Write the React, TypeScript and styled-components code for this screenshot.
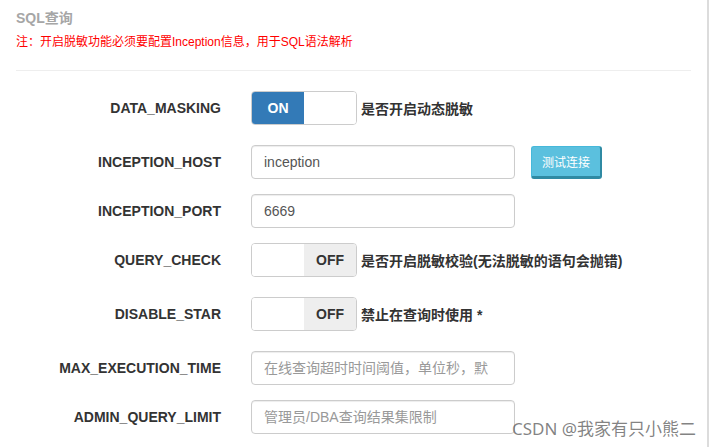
import React from "react";
import styled, { createGlobalStyle } from "styled-components";

const GlobalStyle = createGlobalStyle`
  html, body { margin: 0; padding: 0; background: #fff; }
  body {
    font-family: "Liberation Sans", Arial, "Noto Sans CJK SC", sans-serif;
    color: #333;
  }
  * { box-sizing: border-box; }
`;

const Panel = styled.div`
  position: relative;
  width: 709px;
  height: 447px;
  overflow: hidden;
  border-right: 2px solid #dcdcdc;
  padding: 8px 16px 0 16px;
`;

const Title = styled.div`
  font-size: 14px;
  line-height: 20px;
  font-weight: 700;
  color: #a6a6a6;
  font-family: "Liberation Sans", Arial, "Noto Sans CJK SC", sans-serif;
`;

const Note = styled.div`
  margin-top: 6px;
  font-size: 12px;
  line-height: 17px;
  color: #ff0000;
`;

const Divider = styled.hr`
  margin: 19px 0 20px 0;
  border: 0;
  border-top: 1px solid #eee;
  height: 0;
`;

const Form = styled.div`
  display: flex;
  flex-direction: column;
  gap: 15px;
`;

const Row = styled.div<{ $tall?: boolean }>`
  display: grid;
  grid-template-columns: 205px 1fr;
  column-gap: 30px;
  min-height: ${(p) => (p.$tall ? "39px" : "34px")};
  align-items: start;
`;

const Label = styled.label`
  text-align: right;
  font-size: 14px;
  line-height: 34px;
  font-weight: bold;
  color: #333;
`;

const Control = styled.div`
  display: flex;
  align-items: center;
  height: 34px;
`;

const Input = styled.input`
  width: 264px;
  height: 34px;
  padding: 6px 26px 6px 12px;
  font-size: 14px;
  font-family: "Liberation Sans", Arial, "Noto Sans CJK SC", sans-serif;
  color: #555;
  background: #fff;
  border: 1px solid #ccc;
  border-radius: 4px;
  box-shadow: inset 0 1px 1px rgba(0, 0, 0, 0.075);
  outline: none;
  &::placeholder { color: #999; }
`;

const Switch = styled.div`
  display: flex;
  width: 106px;
  height: 34px;
  border: 1px solid #ccc;
  border-radius: 4px;
  overflow: hidden;
`;

const SwitchHalf = styled.span<{ $kind: "on" | "off" | "blank" }>`
  flex: 1;
  display: flex;
  align-items: center;
  justify-content: center;
  font-size: 14px;
  font-weight: bold;
  color: ${(p) => (p.$kind === "on" ? "#fff" : "#333")};
  background: ${(p) =>
    p.$kind === "on" ? "#337ab7" : p.$kind === "off" ? "#eeeeee" : "#fff"};
`;

const Help = styled.span`
  margin-left: 4px;
  font-size: 14px;
  font-weight: bold;
  color: #333;
  font-family: "Liberation Sans", Arial, "Noto Sans CJK SC", sans-serif;
`;

const InfoButton = styled.button`
  margin-left: 16px;
  width: 71px;
  height: 33px;
  font-size: 12px;
  font-family: "Liberation Sans", Arial, "Noto Sans CJK SC", sans-serif;
  color: #fff;
  background: #5bc0de;
  border: 1px solid #46b8da;
  border-bottom: 3px solid #2f8aa3;
  border-right: 2px solid #2f8aa3;
  border-radius: 3px;
  padding: 0;
`;

const Watermark = styled.div`
  position: absolute;
  left: 512px;
  top: 418px;
  font-size: 17px;
  line-height: 22px;
  color: rgba(90, 90, 90, 0.75);
  font-family: "Noto Sans", "Noto Sans CJK SC", sans-serif;
  white-space: nowrap;
`;

function Toggle({ on }: { on: boolean }) {
  return (
    <Switch>
      {on ? (
        <>
          <SwitchHalf $kind="on">ON</SwitchHalf>
          <SwitchHalf $kind="blank" />
        </>
      ) : (
        <>
          <SwitchHalf $kind="blank" />
          <SwitchHalf $kind="off">OFF</SwitchHalf>
        </>
      )}
    </Switch>
  );
}

export default function App() {
  return (
    <>
      <GlobalStyle />
      <Panel>
        <Title>SQL查询</Title>
        <Note>注：开启脱敏功能必须要配置Inception信息，用于SQL语法解析</Note>
        <Divider />
        <Form>
          <Row $tall>
            <Label>DATA_MASKING</Label>
            <Control>
              <Toggle on />
              <Help>是否开启动态脱敏</Help>
            </Control>
          </Row>
          <Row>
            <Label>INCEPTION_HOST</Label>
            <Control>
              <Input defaultValue="inception" />
              <InfoButton>测试连接</InfoButton>
            </Control>
          </Row>
          <Row>
            <Label>INCEPTION_PORT</Label>
            <Control>
              <Input defaultValue="6669" />
            </Control>
          </Row>
          <Row $tall>
            <Label>QUERY_CHECK</Label>
            <Control>
              <Toggle on={false} />
              <Help>是否开启脱敏校验(无法脱敏的语句会抛错)</Help>
            </Control>
          </Row>
          <Row $tall>
            <Label>DISABLE_STAR</Label>
            <Control>
              <Toggle on={false} />
              <Help>禁止在查询时使用 *</Help>
            </Control>
          </Row>
          <Row>
            <Label>MAX_EXECUTION_TIME</Label>
            <Control>
              <Input placeholder="在线查询超时时间阈值，单位秒，默认值60" />
            </Control>
          </Row>
          <Row>
            <Label>ADMIN_QUERY_LIMIT</Label>
            <Control>
              <Input placeholder="管理员/DBA查询结果集限制" />
            </Control>
          </Row>
        </Form>
        <Watermark>CSDN @我家有只小熊二</Watermark>
      </Panel>
    </>
  );
}
